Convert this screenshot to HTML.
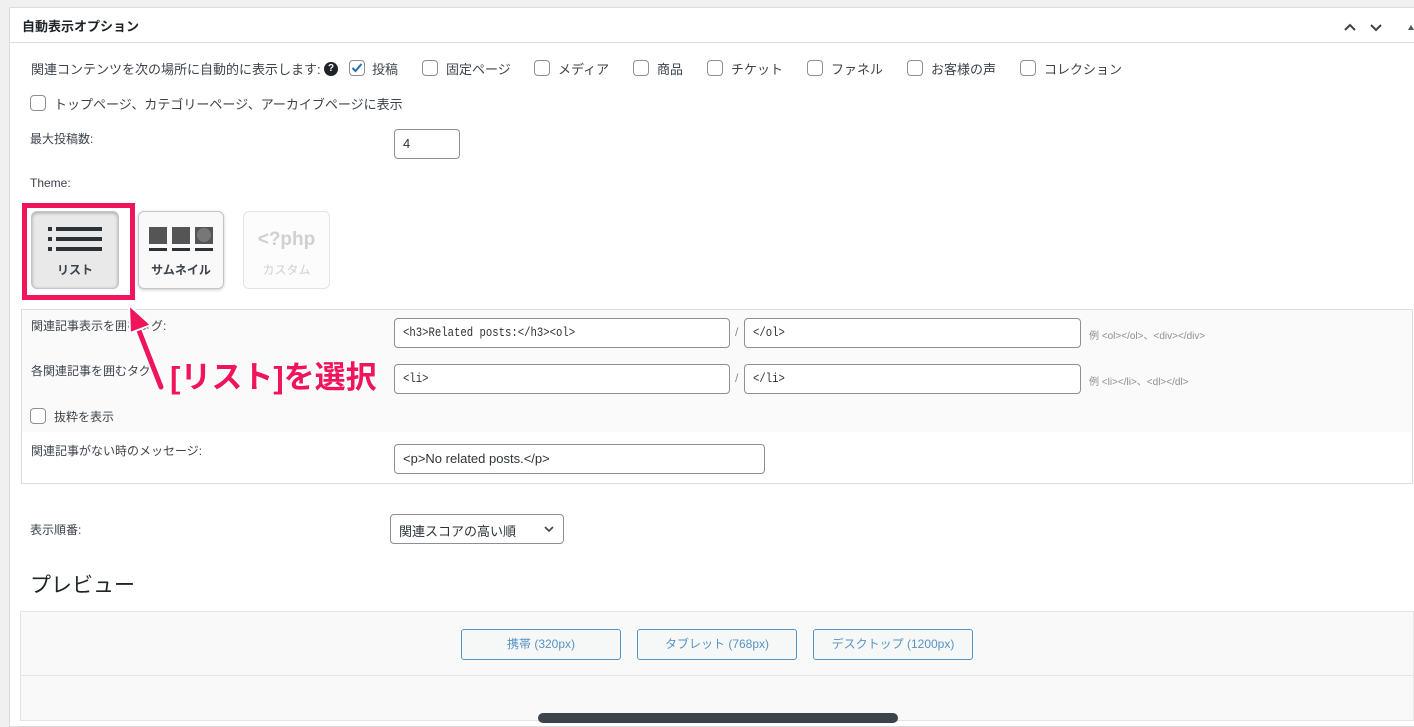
<!DOCTYPE html>
<html><head><meta charset="utf-8">
<style>
*{box-sizing:border-box;margin:0;padding:0}
body{width:1414px;height:716px;overflow:hidden;background:#f0f0f1;font-family:"Liberation Sans","Noto Sans CJK JP",sans-serif;color:#3c434a;position:relative}
.a{position:absolute}
.panel{left:9px;top:7px;width:1406px;height:720px;background:#fff;border:1px solid #dcdcde}
.hdr{left:10px;top:8px;width:1404px;height:35px;border-bottom:1px solid #dcdcde;background:#fff}
.t13{font-size:13px;white-space:nowrap}
.t12{font-size:12px;white-space:nowrap}
.cb{width:16px;height:16px;border:1px solid #8c8f94;border-radius:4px;background:#fff}
.inp{border:1px solid #8c8f94;border-radius:4px;background:#fff;height:30px;font-size:13px;padding:6px 8px;white-space:nowrap;color:#2c3338}
.mono{font-family:"Liberation Mono","DejaVu Sans Mono",monospace;font-size:12.5px;transform:scaleX(.85);transform-origin:left}
.btn{border:1px solid #c3c4c7;border-radius:6px;background:#f6f7f7;box-shadow:0 1px 3px rgba(0,0,0,.2)}
.pbtn{height:31px;border:1px solid #2271b1;border-radius:3px;background:#f6f7f7;color:#2271b1;font-size:12px;text-align:center;line-height:29px;opacity:.75}
</style></head><body>
<div class="a panel"></div>
<div class="a hdr"></div>
<div class="a" style="left:22px;top:16px;font-size:13px;font-weight:bold;color:#1d2327">自動表示オプション</div>
<svg class="a" style="left:1340px;top:18px" width="75" height="16"><path d="M5 12 L10 7 L15 12" stroke="#3c434a" stroke-width="2" fill="none"/><path d="M31 7 L36 12 L41 7" stroke="#3c434a" stroke-width="2" fill="none"/><path d="M68 12 L71 7 L74 12Z" fill="#50575e"/></svg>

<div class="a t13" style="left:31px;top:59px">関連コンテンツを次の場所に自動的に表示します:</div>
<div class="a" style="left:324px;top:62px;width:14px;height:14px;border-radius:50%;background:#1d2327;color:#fff;font-size:10px;font-weight:bold;text-align:center;line-height:14px">?</div>
<div class="a cb" style="left:349px;top:60px"></div>
<svg class="a" style="left:349px;top:60px" width="16" height="16"><path d="M3.5 8 L6.5 11 L12.5 4" stroke="#2271b1" stroke-width="2" fill="none"/></svg>
<div class="a t13" style="left:372px;top:59px">投稿</div>
<div class="a cb" style="left:422px;top:60px"></div><div class="a t13" style="left:446px;top:59px">固定ページ</div>
<div class="a cb" style="left:534px;top:60px"></div><div class="a t13" style="left:558px;top:59px">メディア</div>
<div class="a cb" style="left:633px;top:60px"></div><div class="a t13" style="left:657px;top:59px">商品</div>
<div class="a cb" style="left:707px;top:60px"></div><div class="a t13" style="left:731px;top:59px">チケット</div>
<div class="a cb" style="left:807px;top:60px"></div><div class="a t13" style="left:831px;top:59px">ファネル</div>
<div class="a cb" style="left:907px;top:60px"></div><div class="a t13" style="left:931px;top:59px">お客様の声</div>
<div class="a cb" style="left:1020px;top:60px"></div><div class="a t13" style="left:1044px;top:59px">コレクション</div>

<div class="a cb" style="left:30px;top:95px"></div><div class="a t13" style="left:54px;top:94px">トップページ、カテゴリーページ、アーカイブページに表示</div>

<div class="a t12" style="left:30px;top:130px">最大投稿数:</div>
<div class="a inp" style="left:394px;top:129px;width:66px">4</div>
<div class="a t12" style="left:30px;top:176px">Theme:</div>

<div class="a btn" style="left:31px;top:211px;width:88px;height:78px;background:#e9e9ea;box-shadow:inset 0 1px 3px rgba(0,0,0,.3)"></div>
<svg class="a" style="left:46px;top:226px" width="60" height="30"><rect x="2" y="1" width="4" height="4" fill="#2c3338"/><rect x="10" y="1" width="46" height="4" fill="#2c3338"/><rect x="2" y="11" width="4" height="4" fill="#2c3338"/><rect x="10" y="11" width="46" height="4" fill="#2c3338"/><rect x="2" y="21" width="4" height="4" fill="#2c3338"/><rect x="10" y="21" width="46" height="4" fill="#2c3338"/></svg>
<div class="a" style="left:31px;top:261px;width:88px;text-align:center;font-size:12px;font-weight:bold;color:#3c434a">リスト</div>

<div class="a btn" style="left:138px;top:211px;width:86px;height:78px;background:#f9f9f9"></div>
<svg class="a" style="left:148px;top:227px" width="68" height="28"><rect x="1" y="0" width="18" height="17" fill="#555"/><rect x="24" y="0" width="18" height="17" fill="#555"/><rect x="47" y="0" width="18" height="17" fill="#555"/><circle cx="56" cy="8" r="7" fill="#777"/><rect x="1" y="21" width="18" height="3" fill="#2c3338"/><rect x="24" y="21" width="18" height="3" fill="#2c3338"/><rect x="47" y="21" width="18" height="3" fill="#2c3338"/></svg>
<div class="a" style="left:138px;top:261px;width:86px;text-align:center;font-size:12px;font-weight:bold;color:#3c434a">サムネイル</div>

<div class="a" style="left:243px;top:211px;width:87px;height:78px;border:1px solid #e4e4e6;border-radius:6px;background:#fcfcfc"></div>
<div class="a" style="left:243px;top:229px;width:87px;text-align:center;font-size:19px;font-weight:bold;color:#cfd0d2">&lt;?php</div>
<div class="a" style="left:243px;top:261px;width:87px;text-align:center;font-size:12px;color:#cfd0d2">カスタム</div>

<div class="a" style="left:21px;top:309px;width:1392px;height:175px;border:1px solid #dcdcde;background:#fafafa"></div>
<div class="a" style="left:22px;top:432px;width:1390px;height:51px;background:#fff"></div>
<div class="a t12" style="left:31px;top:317px">関連記事表示を囲むタグ:</div>
<div class="a inp" style="left:394px;top:318px;width:336px"><span class="mono a" style="left:8px;top:7px">&lt;h3&gt;Related posts:&lt;/h3&gt;&lt;ol&gt;</span></div>
<div class="a t12" style="left:735px;top:325px;color:#888">/</div>
<div class="a inp" style="left:744px;top:318px;width:337px"><span class="mono a" style="left:8px;top:7px">&lt;/ol&gt;</span></div>
<div class="a" style="left:1089px;top:327px;font-size:10px;color:#8c8f94;white-space:nowrap">例 &lt;ol&gt;&lt;/ol&gt;、&lt;div&gt;&lt;/div&gt;</div>

<div class="a t12" style="left:31px;top:362px">各関連記事を囲むタグ:</div>
<div class="a inp" style="left:394px;top:364px;width:336px"><span class="mono a" style="left:8px;top:7px">&lt;li&gt;</span></div>
<div class="a t12" style="left:735px;top:371px;color:#888">/</div>
<div class="a inp" style="left:744px;top:364px;width:337px"><span class="mono a" style="left:8px;top:7px">&lt;/li&gt;</span></div>
<div class="a" style="left:1089px;top:373px;font-size:10px;color:#8c8f94;white-space:nowrap">例 &lt;li&gt;&lt;/li&gt;、&lt;dl&gt;&lt;/dl&gt;</div>

<div class="a cb" style="left:30px;top:408px"></div><div class="a t12" style="left:54px;top:408px">抜粋を表示</div>
<div class="a t12" style="left:31px;top:442px">関連記事がない時のメッセージ:</div>
<div class="a inp" style="left:394px;top:444px;width:371px">&lt;p&gt;No related posts.&lt;/p&gt;</div>

<div class="a t12" style="left:30px;top:521px">表示順番:</div>
<div class="a inp" style="left:390px;top:514px;width:174px;height:30px;font-size:13px">関連スコアの高い順</div>
<svg class="a" style="left:543px;top:524px" width="12" height="10"><path d="M2 3 L6 7 L10 3" stroke="#3c434a" stroke-width="1.6" fill="none"/></svg>

<div class="a" style="left:30px;top:569px;font-size:21px;color:#1d2327">プレビュー</div>
<div class="a" style="left:20px;top:611px;width:1394px;height:110px;border:1px solid #e4e4e6;background:#f9f9f9"></div>
<div class="a" style="left:21px;top:675px;width:1393px;height:1px;background:#e4e4e6"></div>
<div class="a pbtn" style="left:461px;top:629px;width:160px">携帯 (320px)</div>
<div class="a pbtn" style="left:637px;top:629px;width:160px">タブレット (768px)</div>
<div class="a pbtn" style="left:813px;top:629px;width:160px">デスクトップ (1200px)</div>
<div class="a" style="left:538px;top:713px;width:360px;height:10px;border-radius:6px;background:#3c434a"></div>

<div class="a" style="left:22px;top:203px;width:113px;height:97px;border:5px solid #f0145a"></div>
<svg class="a" style="left:120px;top:295px" width="60" height="100"><path d="M41 92 L16 28" stroke="#fff" stroke-width="9" stroke-linecap="round"/><path d="M41 92 L16 28" stroke="#f0145a" stroke-width="5" stroke-linecap="round"/><path d="M9 10 L31 30 L10 38Z" fill="#f0145a" stroke="#fff" stroke-width="2"/></svg>
<div class="a" style="left:170px;top:352px;font-size:31px;font-weight:bold;color:#f0145a;white-space:nowrap;text-shadow:0 0 2px #fff,0 0 3px #fff,1px 1px 0 #fff,-1px -1px 0 #fff,1px -1px 0 #fff,-1px 1px 0 #fff">[リスト]を選択</div>
</body></html>
